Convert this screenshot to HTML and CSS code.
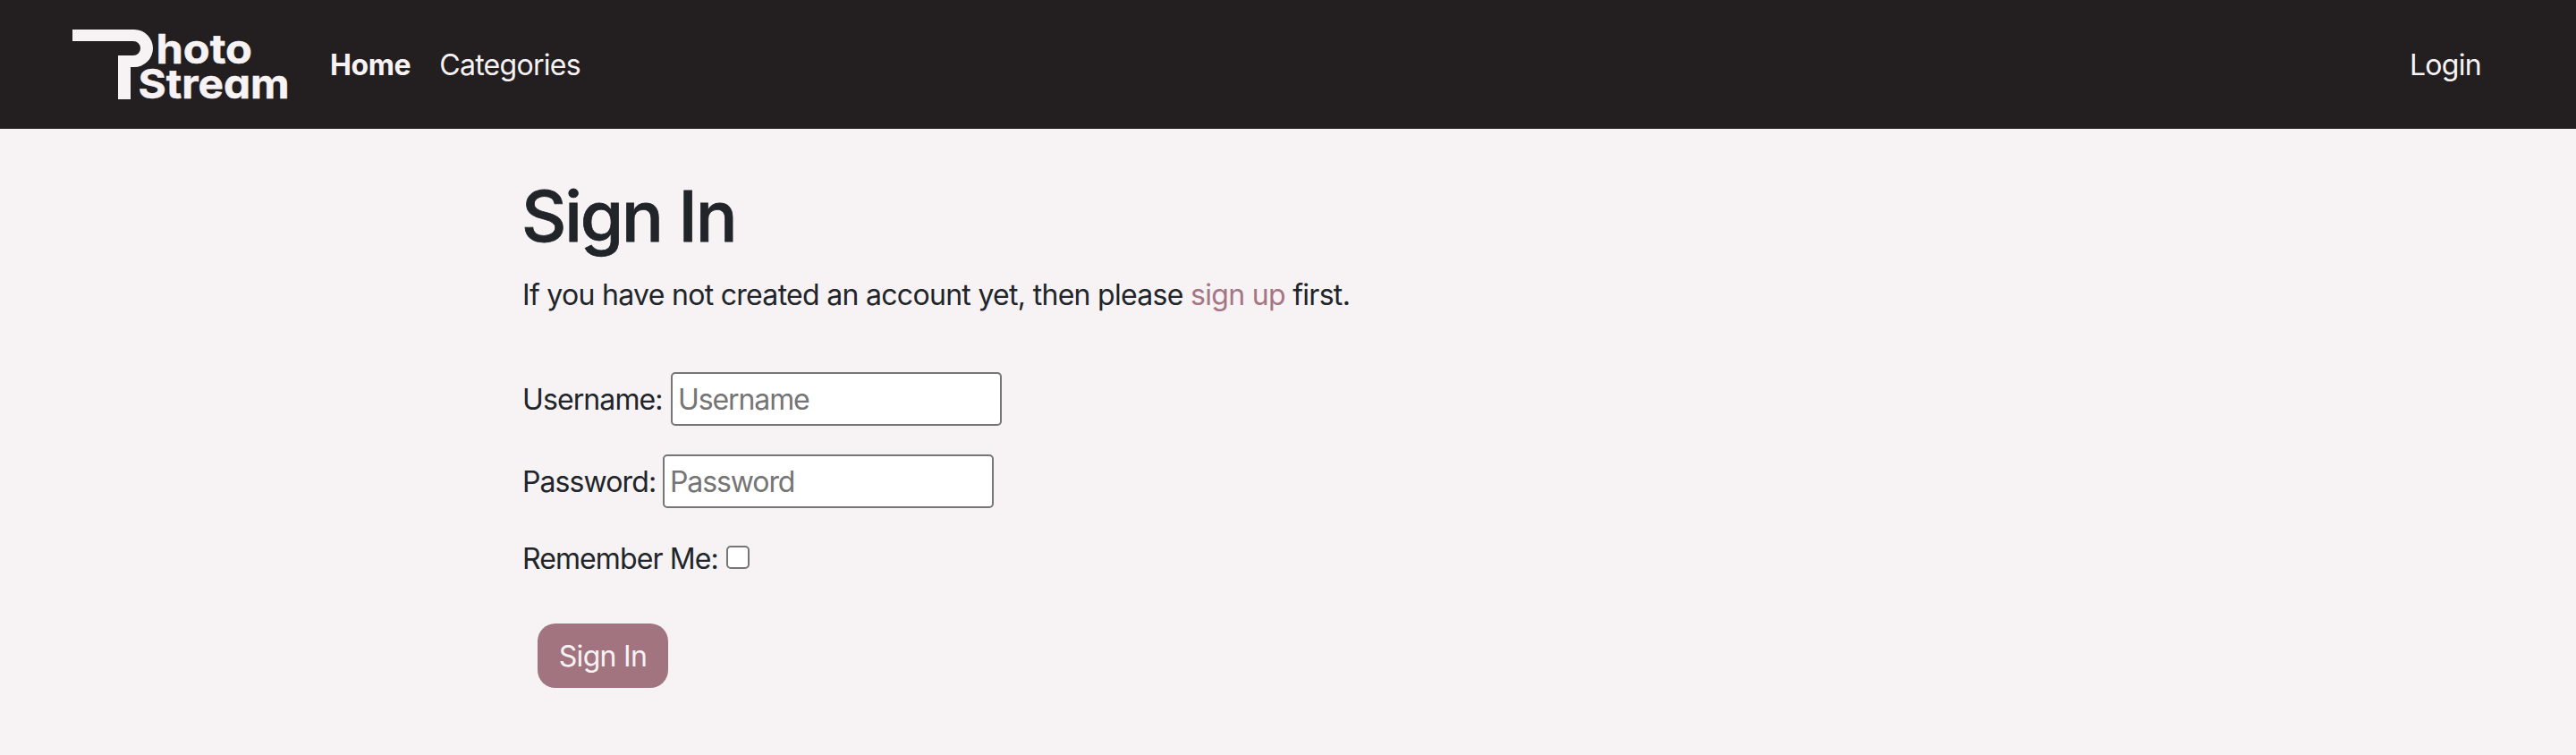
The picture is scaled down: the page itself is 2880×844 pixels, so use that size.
FILE: index.html
```html
<!DOCTYPE html>
<html lang="en">
<head>
<meta charset="utf-8">
<title>Photo Stream - Sign In</title>
<link rel="stylesheet" href="styles.css">
</head>
<body>
<header class="navbar">
  <a class="brand" href="#" aria-label="Photo Stream">
    <svg class="logo" width="244" height="82" viewBox="80 31 244 82">
      <path d="M81 33H150A21 21 0 0 1 150 75H146V111H132V62H149A8 8 0 0 0 149 46H81Z"/>
      <text x="174.5" y="70.7" textLength="107.5" lengthAdjust="spacingAndGlyphs">hoto</text>
      <text x="154.5" y="110" textLength="169" lengthAdjust="spacingAndGlyphs">Stream</text>
    </svg>
  </a>
  <nav class="links">
    <a class="link active" href="#">Home</a>
    <a class="link categories" href="#">Categories</a>
  </nav>
  <a class="link login" href="#">Login</a>
</header>
<main class="content">
  <h1 class="title">Sign In</h1>
  <p class="intro">If you have not created an account yet, then please <a class="signup" href="#">sign up</a> first.</p>
  <form class="form">
    <div class="row">
      <label class="label user" for="username">Username:</label>
      <input class="field" id="username" type="text" placeholder="Username">
    </div>
    <div class="row">
      <label class="label pass" for="password">Password:</label>
      <input class="field" id="password" type="password" placeholder="Password">
    </div>
    <div class="row remember-row">
      <label class="label remember" for="remember">Remember Me:</label>
      <input class="check" id="remember" type="checkbox">
    </div>
    <button class="submit" type="button">Sign In</button>
  </form>
</main>
</body>
</html>
```

FILE: styles.css
```css
* { box-sizing: border-box; }
body {
  margin: 0;
  min-height: 844px;
  background: #f7f3f4;
  color: #212529;
  font: 400 32px/48px Inter, sans-serif;
  letter-spacing: -0.7px;
}
a { text-decoration: none; }
.navbar {
  display: flex;
  align-items: center;
  height: 144px;
  padding: 0 106px 0 80px;
  background: #231f20;
}
.brand { display: flex; margin-right: 45px; }
.logo { display: block; overflow: visible; fill: #f7f3f4; }
.logo text {
  font: 700 45px Inter, sans-serif;
  font-feature-settings: "cv11";
  letter-spacing: 0;
  stroke: #f7f3f4;
  stroke-width: 0.5px;
}
.links { display: flex; gap: 32px; }
.link { padding-top: 2px; color: #f7f3f4; white-space: nowrap; }
.active { font-weight: 700; letter-spacing: -0.4px; }
.login { margin-left: auto; }
.content { padding: 50px 0 0 583px; }
.title {
  margin: 0 0 16px;
  font-size: 78px;
  line-height: 96px;
  font-weight: 500;
  letter-spacing: -2.1px;
  -webkit-text-stroke: 0.8px #212529;
}
.intro { margin: 0 0 62px 1px; }
.form { padding-left: 1px; }
.signup { color: #a57584; }
.row { display: flex; align-items: center; height: 60px; margin-bottom: 32px; }
.label { flex: none; padding-top: 2px; white-space: nowrap; letter-spacing: -0.9px; }
.user { width: 166px; }
.pass { width: 157px; }
.remember { width: 228px; }
.remember-row { height: 48px; margin-bottom: 49px; }
.field {
  width: 370px;
  height: 60px;
  padding: 2px 6px;
  border: 2px solid #767676;
  border-radius: 5px;
  background: #fff;
  font: inherit;
  letter-spacing: -1.1px;
}
.field::placeholder { color: #757575; opacity: 1; }
.check {
  appearance: none;
  width: 26px;
  height: 26px;
  margin: 0 0 2px;
  border: 2px solid #767676;
  border-radius: 5px;
  background: #fff;
}
.submit {
  display: block;
  width: 146px;
  height: 72px;
  margin: 0 0 0 17px;
  padding: 2px 0 0;
  border: 0;
  border-radius: 20px;
  background: #a17480;
  color: #f7f3f4;
  font: inherit;
  letter-spacing: inherit;
}
```
